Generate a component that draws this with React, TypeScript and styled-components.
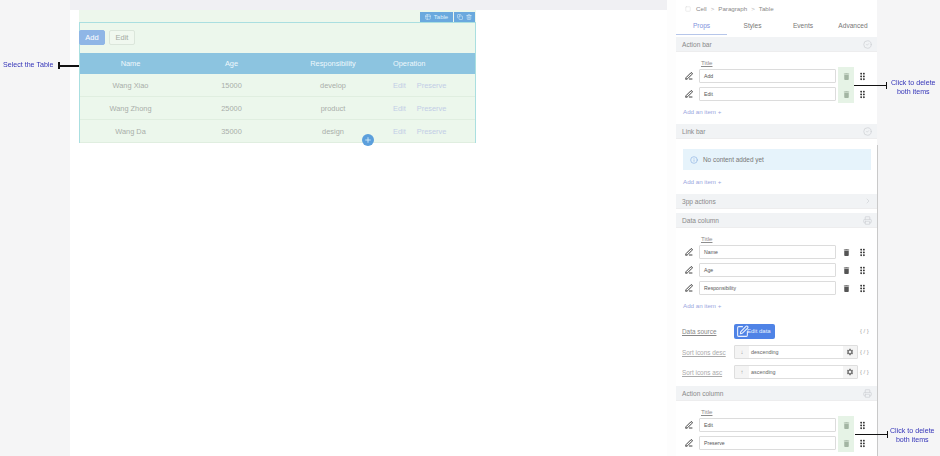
import React from "react";
import styled, { createGlobalStyle } from "styled-components";
import { CircleCheck, ChevronRight, Info, PenLine, SquarePen, Plus, Table2, Copy, Trash2, Printer, Square } from "lucide-react";
import { MdDelete, MdDragIndicator, MdSettings } from "react-icons/md";

const Global = createGlobalStyle`
  html, body { margin: 0; padding: 0; background: #f5f5f6; }
  body { font-family: "Liberation Sans", Arial, sans-serif; color: #555; }
  * { box-sizing: border-box; }
`;

const Page = styled.div`
  position: relative;
  width: 940px;
  height: 456px;
  overflow: hidden;
  display: flex;
  padding-left: 70px;
  filter: blur(0.4px);
`;

const Canvas = styled.main`
  width: 597px;
  height: 456px;
  background: #fff;
  display: flex;
  flex-direction: column;
`;

const Strip = styled.div`
  height: 10px;
  flex: none;
  background: #f0f0f3;
`;

const Stage = styled.div`
  padding-left: 9px;
`;

const Gap = styled.div`
  width: 9px;
  background: #fdfdfd;
`;

const TopBand = styled.div`
  width: 397px;
  height: 12px;
  background: #edf7ec;
`;

const Selected = styled.section`
  position: relative;
  width: 397px;
  height: 121px;
  background: #ecf7ec;
  border: 1px solid #aadfe0;
`;

const Toolbar = styled.div`
  height: 30px;
  display: flex;
  align-items: center;
  gap: 4px;
  padding-bottom: 1px;
  margin-left: -1px;
`;

const ActionButton = styled.button<{ $primary?: boolean }>`
  height: 15px;
  width: 26px;
  padding: 0;
  font: 7.5px "Liberation Sans", Arial, sans-serif;
  border-radius: 2px;
  color: ${(p) => (p.$primary ? "#fff" : "#a3aba3")};
  background: ${(p) => (p.$primary ? "#8fb6e6" : "#f0f8ef")};
  border: 1px solid ${(p) => (p.$primary ? "#8fb6e6" : "#dbe6db")};
`;

const Grid = styled.div`
  display: grid;
  grid-template-columns: 101px 101px 102px 1fr;
`;

const HeadRow = styled(Grid)`
  height: 21px;
  background: #8cc4e0;
  color: #eef8fc;
  font-size: 7.4px;
  align-items: center;
  padding-bottom: 1px;
`;

const HeadCell = styled.div<{ $left?: boolean }>`
  text-align: ${(p) => (p.$left ? "left" : "center")};
  padding-left: ${(p) => (p.$left ? "9px" : "0")};
`;

const BodyRow = styled(Grid)`
  height: 23px;
  font-size: 7.4px;
  color: #a9aeaa;
  align-items: center;
  border-bottom: 1px solid #e0eee0;
  &:last-of-type { border-bottom: 0; height: 22px; }
`;

const BodyCell = styled.div`
  text-align: center;
`;

const OpCell = styled.div`
  display: flex;
  gap: 11px;
  padding-left: 9px;
  color: #c2cde6;
`;

const Tag = styled.div`
  position: absolute;
  top: -11px;
  right: 0;
  height: 10px;
  display: flex;
  gap: 1px;
`;

const TagPart = styled.div<{ $w: number }>`
  width: ${(p) => p.$w}px;
  background: #6aa9de;
  color: #dff0fb;
  font-size: 6px;
  display: flex;
  align-items: center;
  justify-content: center;
  gap: 3px;
`;

const AddDot = styled.div`
  position: absolute;
  left: 282px;
  bottom: -4px;
  width: 12px;
  height: 12px;
  border-radius: 50%;
  background: #5b9fdc;
  color: #dff0fb;
  display: flex;
  align-items: center;
  justify-content: center;
`;

const Panel = styled.aside`
  width: 202px;
  height: 456px;
  background: #fff;
  border-right: 1px solid #c9c9c9;
  display: flex;
  flex-direction: column;
  position: relative;
`;

const TopMask = styled.div`
  position: absolute;
  right: -1px;
  top: 0;
  width: 1px;
  height: 145px;
  background: #f5f5f6;
`;

const Crumbs = styled.nav`
  height: 17px;
  display: flex;
  align-items: center;
  padding: 0 0 0 9px;
  gap: 4px;
  font-size: 6.2px;
  color: #8a8a8a;
`;

const CrumbLead = styled.span`
  margin-left: 1px;
`;

const Sep = styled.span`
  color: #b5b5b5;
`;

const Tabs = styled.div`
  height: 18px;
  display: grid;
  grid-template-columns: 51px 51px 50px 50px;
  font-size: 6.6px;
  color: #777;
`;

const Tab = styled.div<{ $active?: boolean }>`
  display: flex;
  align-items: center;
  justify-content: center;
  padding-bottom: 1px;
  color: ${(p) => (p.$active ? "#7f93dc" : "#777")};
  border-bottom: 1px solid ${(p) => (p.$active ? "#b6c6ea" : "transparent")};
`;

const SectionHead = styled.div<{ $mt?: number }>`
  height: 15px;
  margin-top: ${(p) => p.$mt ?? 0}px;
  padding: 0 5px 0 6px;
  background: #f1f3f5;
  display: flex;
  align-items: center;
  justify-content: space-between;
  font-size: 6.6px;
  color: #8a8a8a;
  border-bottom: 1px solid #ededee;
  svg { color: #cfd2d5; }
`;

const ColumnTitle = styled.div<{ $mt: number }>`
  margin: ${(p) => p.$mt}px 0 0 25px;
  height: 8px;
  line-height: 8px;
  font-size: 6.2px;
  color: #8d8d8d;
  text-decoration: underline;
`;

const ItemRow = styled.div<{ $mt: number }>`
  height: 14px;
  margin-top: ${(p) => p.$mt}px;
  display: flex;
  align-items: center;
  padding-left: 9px;
  svg { flex: none; }
`;

const PenSlot = styled.div`
  width: 14px;
  color: #222;
  display: flex;
`;

const TextField = styled.div`
  width: 137px;
  height: 14px;
  border: 1px solid #dcdcdc;
  border-radius: 1px;
  padding-left: 4px;
  font-size: 5.2px;
  color: #555;
  display: flex;
  align-items: center;
`;

const TrashSlot = styled.div<{ $green?: boolean }>`
  width: 16px;
  height: ${(p) => (p.$green ? "18px" : "14px")};
  margin-left: 2px;
  display: flex;
  align-items: center;
  justify-content: center;
  background: ${(p) => (p.$green ? "#e6f3e6" : "transparent")};
  color: ${(p) => (p.$green ? "#a3b5a3" : "#555")};
`;

const GripSlot = styled.div`
  width: 9px;
  margin-left: 4px;
  display: flex;
  justify-content: center;
  color: #333;
`;

const AddLink = styled.div<{ $mt: number }>`
  margin: ${(p) => p.$mt}px 0 0 7px;
  height: 8px;
  line-height: 8px;
  font-size: 6.2px;
  color: #9aa6de;
`;

const Alert = styled.div`
  width: 188px;
  height: 21px;
  margin: 10px 0 0 7px;
  background: #e6f3fb;
  display: flex;
  align-items: center;
  gap: 5px;
  padding-left: 7px;
  font-size: 6.4px;
  color: #777;
  svg { color: #8fb4e2; }
`;

const PropRow = styled.div<{ $mt: number }>`
  height: 14px;
  margin-top: ${(p) => p.$mt}px;
  display: flex;
  align-items: center;
  padding-left: 6px;
`;

const PropLabel = styled.div<{ $dark?: boolean }>`
  width: 52px;
  font-size: 6.4px;
  color: ${(p) => (p.$dark ? "#888" : "#aaa")};
  text-decoration: underline;
`;

const EditButton = styled.button`
  width: 41px;
  height: 15px;
  padding: 0 0 0 2px;
  border: 0;
  border-radius: 2px;
  background: #4f83e6;
  color: #e9f0fd;
  font: 6px "Liberation Sans", Arial, sans-serif;
  display: flex;
  align-items: center;
  svg { margin-right: -2px; }
`;

const Expr = styled.div<{ $ml: number }>`
  margin-left: ${(p) => p.$ml}px;
  font-size: 6px;
  color: #a5a5a5;
  letter-spacing: 1.5px;
`;

const SortField = styled.div`
  width: 124px;
  height: 14px;
  border: 1px solid #dedede;
  border-radius: 1px;
  display: flex;
  align-items: center;
  font-size: 5.4px;
  color: #666;
`;

const SortAddon = styled.div<{ $end?: boolean }>`
  width: 14px;
  height: 100%;
  background: #f4f4f4;
  color: #999;
  display: flex;
  align-items: center;
  justify-content: center;
  font-size: 6px;
  ${(p) => (p.$end ? "margin-left: auto;" : "margin-right: 2px;")}
`;

const Note = styled.div<{ $left: number; $top: number; $center?: boolean }>`
  position: absolute;
  left: ${(p) => p.$left}px;
  top: ${(p) => p.$top}px;
  font-size: 7.1px;
  line-height: 8.5px;
  color: #3434b8;
  text-align: ${(p) => (p.$center ? "center" : "left")};
  white-space: pre-line;
`;

const Leader = styled.div<{ $left: number; $top: number; $w: number; $barLeft?: boolean }>`
  position: absolute;
  left: ${(p) => p.$left}px;
  top: ${(p) => p.$top}px;
  width: ${(p) => p.$w}px;
  height: 1.5px;
  background: #111;
  &::after {
    content: "";
    position: absolute;
    ${(p) => (p.$barLeft ? "left: 0;" : "right: 0;")}
    top: -3px;
    width: 1.5px;
    height: 7px;
    background: #111;
  }
`;

const rows = [
  ["Wang Xiao", "15000", "develop"],
  ["Wang Zhong", "25000", "product"],
  ["Wang Da", "35000", "design"],
];

const Item = ({ label, mt, green }: { label: string; mt: number; green?: boolean }) => (
  <ItemRow $mt={mt}>
    <PenSlot><PenLine size={8} strokeWidth={2.6} /></PenSlot>
    <TextField>{label}</TextField>
    <TrashSlot $green={green}><MdDelete size={9} /></TrashSlot>
    <GripSlot><MdDragIndicator size={11} /></GripSlot>
  </ItemRow>
);

export default function App() {
  return (
    <Page>
      <Global />
      <Canvas>
        <Strip />
        <Stage>
          <TopBand />
          <Selected>
            <Tag>
              <TagPart $w={33}><Table2 size={6} />Table</TagPart>
              <TagPart $w={21}><Copy size={6} /><Trash2 size={6} /></TagPart>
            </Tag>
            <Toolbar>
              <ActionButton $primary>Add</ActionButton>
              <ActionButton>Edit</ActionButton>
            </Toolbar>
            <HeadRow>
              <HeadCell>Name</HeadCell>
              <HeadCell>Age</HeadCell>
              <HeadCell>Responsibility</HeadCell>
              <HeadCell $left>Operation</HeadCell>
            </HeadRow>
            {rows.map((r) => (
              <BodyRow key={r[0]}>
                <BodyCell>{r[0]}</BodyCell>
                <BodyCell>{r[1]}</BodyCell>
                <BodyCell>{r[2]}</BodyCell>
                <OpCell><span>Edit</span><span>Preserve</span></OpCell>
              </BodyRow>
            ))}
            <AddDot><Plus size={8} strokeWidth={2.5} /></AddDot>
          </Selected>
        </Stage>
      </Canvas>
      <Gap />
      <Panel>
        <TopMask />
        <Crumbs>
          <Square size={6} color="#ddd" />
          <CrumbLead>Cell</CrumbLead><Sep>&gt;</Sep><span>Paragraph</span><Sep>&gt;</Sep><span>Table</span>
        </Crumbs>
        <Tabs>
          <Tab $active>Props</Tab>
          <Tab>Styles</Tab>
          <Tab>Events</Tab>
          <Tab>Advanced</Tab>
        </Tabs>
        <SectionHead $mt={2}>Action bar<CircleCheck size={9} /></SectionHead>
        <ColumnTitle $mt={7}>Title</ColumnTitle>
        <Item label="Add" mt={2} green />
        <Item label="Edit" mt={4} green />
        <AddLink $mt={7}>Add an item +</AddLink>
        <SectionHead $mt={8}>Link bar<CircleCheck size={9} /></SectionHead>
        <Alert><Info size={8} />No content added yet</Alert>
        <AddLink $mt={8}>Add an item +</AddLink>
        <SectionHead $mt={8}>3pp actions<ChevronRight size={8} /></SectionHead>
        <SectionHead $mt={4}>Data column<Printer size={9} /></SectionHead>
        <ColumnTitle $mt={7}>Title</ColumnTitle>
        <Item label="Name" mt={2} />
        <Item label="Age" mt={4} />
        <Item label="Responsibility" mt={4} />
        <AddLink $mt={7}>Add an item +</AddLink>
        <PropRow $mt={14}>
          <PropLabel $dark>Data source</PropLabel>
          <EditButton><SquarePen size={13} strokeWidth={2} />Edit data</EditButton>
          <Expr $ml={85}>{"{/}"}</Expr>
        </PropRow>
        <PropRow $mt={7}>
          <PropLabel>Sort icons desc</PropLabel>
          <SortField>
            <SortAddon>↓</SortAddon>descending
            <SortAddon $end><MdSettings size={8} color="#777" /></SortAddon>
          </SortField>
          <Expr $ml={2}>{"{/}"}</Expr>
        </PropRow>
        <PropRow $mt={6}>
          <PropLabel>Sort icons asc</PropLabel>
          <SortField>
            <SortAddon>↑</SortAddon>ascending
            <SortAddon $end><MdSettings size={8} color="#777" /></SortAddon>
          </SortField>
          <Expr $ml={2}>{"{/}"}</Expr>
        </PropRow>
        <SectionHead $mt={7}>Action column<Printer size={9} /></SectionHead>
        <ColumnTitle $mt={7}>Title</ColumnTitle>
        <Item label="Edit" mt={2} green />
        <Item label="Preserve" mt={4} green />
      </Panel>
      <Note $left={3} $top={61}>Select the Table</Note>
      <Leader $left={58} $top={65} $w={21} $barLeft />
      <Note $left={891} $top={79} $center>{"Click to delete\nboth items"}</Note>
      <Leader $left={854} $top={84.5} $w={33} />
      <Note $left={890} $top={427} $center>{"Click to delete\nboth items"}</Note>
      <Leader $left={855} $top={433.5} $w={33} />
    </Page>
  );
}
